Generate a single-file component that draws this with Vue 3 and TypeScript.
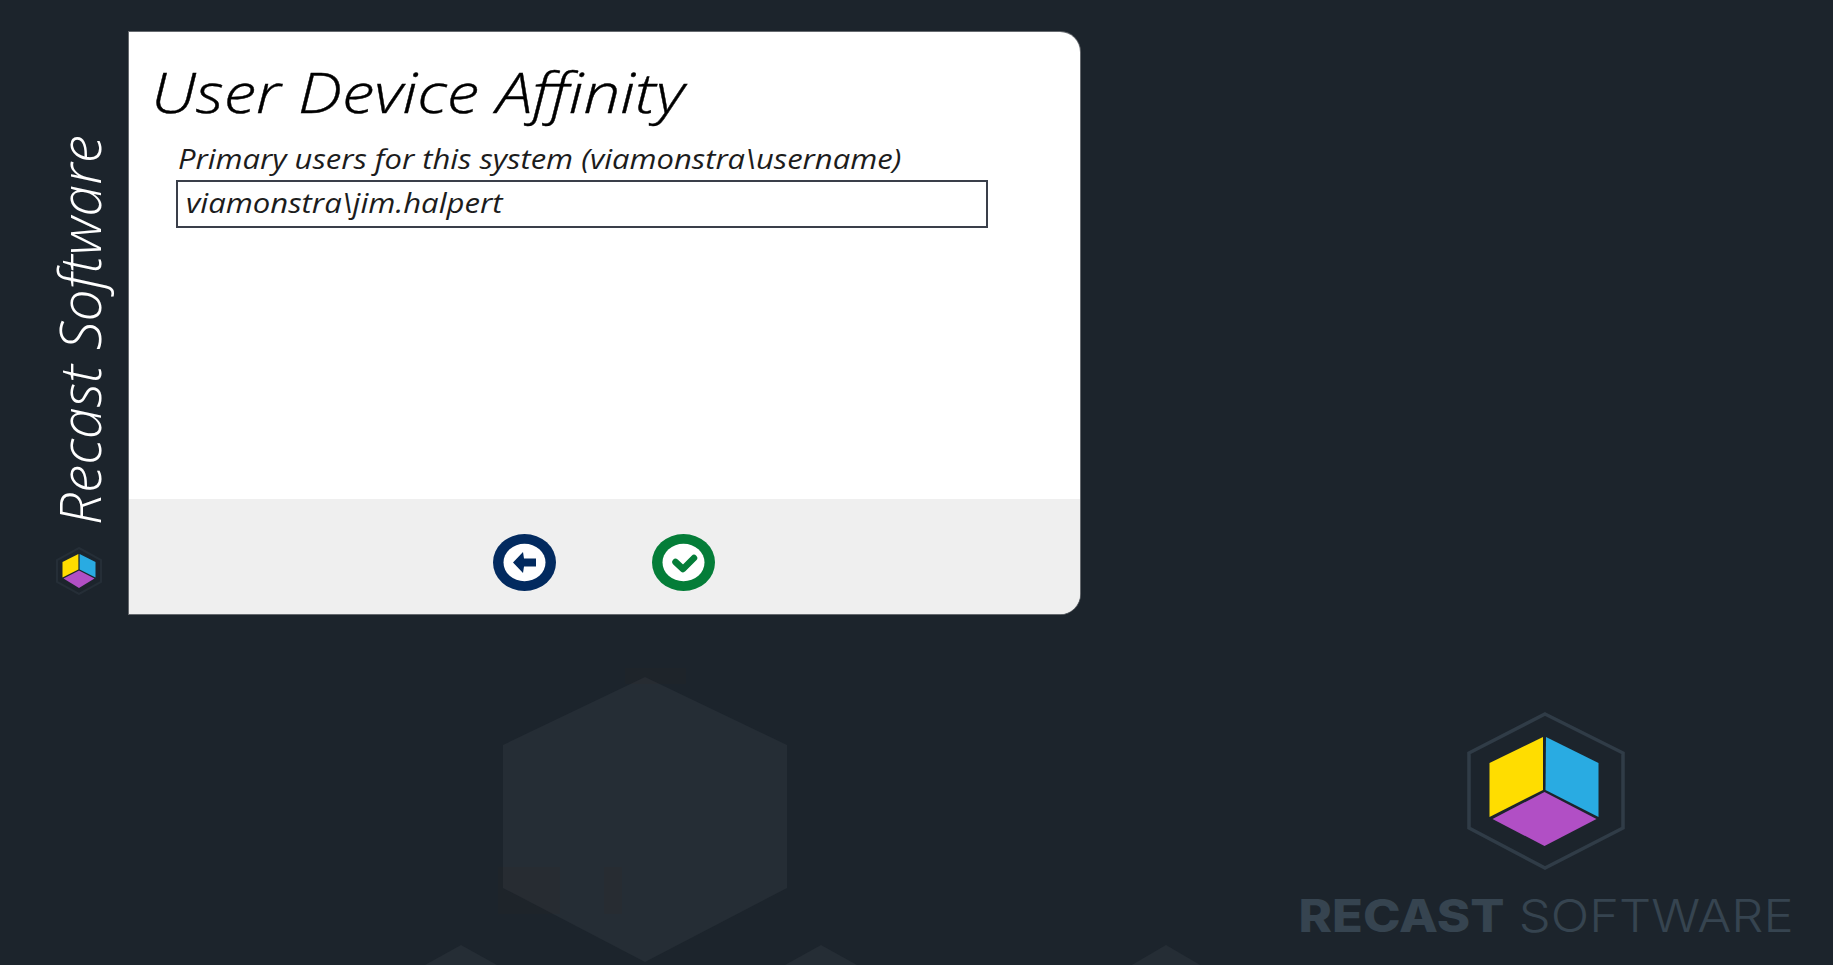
<script setup lang="ts">
const watermark = [
  '645,677 787,745 787,888 645,962 503,888 503,745',
  '461,945 560,1000 362,1000',
  '821,945 920,1000 722,1000',
  '1166,945 1260,1000 1072,1000',
]
const patches = [
  { x: 498, y: 867, w: 62, h: 47 },
  { x: 604, y: 867, w: 18, h: 47 },
  { x: 625, y: 668, w: 61, h: 16 },
]
</script>

<template>
  <div class="screen">
    <svg class="backdrop" viewBox="0 0 1833 965" aria-hidden="true">
      <polygon v-for="pts in watermark" :key="pts" :points="pts" fill="#252d35" />
      <rect v-for="p in patches" :key="p.x" :x="p.x" :y="p.y" :width="p.w" :height="p.h" fill="#3c2814" fill-opacity="0.08" />
    </svg>

    <aside class="rail">
      <span class="rail__name">Recast Software</span>
      <svg class="rail__logo" viewBox="0 0 48 48" aria-hidden="true">
        <polygon points="24,1 46,13 46,35 24,47 2,35 2,13" fill="none" stroke="#252e37" stroke-width="2" />
        <polygon points="23.4,7 23.4,22.5 7.5,30.5 7.5,15" fill="#ffdd00" />
        <polygon points="24.6,7 40.5,15 40.5,30.5 24.6,22.5" fill="#29abe2" />
        <polygon points="24,23.5 39.5,31.5 24,41 8.5,31.5" fill="#b14fc5" />
      </svg>
    </aside>

    <main class="card">
      <div class="card__body">
        <h1 class="card__title">User Device Affinity</h1>
        <div class="field">
          <label class="field__label">Primary users for this system (viamonstra\username)</label>
          <div class="field__box"><span class="field__value">viamonstra\jim.halpert</span></div>
        </div>
      </div>
      <footer class="card__footer">
        <button type="button" class="nav-btn" aria-label="Back">
          <svg viewBox="0 0 63 57" width="63" height="57" aria-hidden="true">
            <ellipse cx="31.5" cy="28.5" rx="31.5" ry="28.5" fill="#022a5f" />
            <ellipse cx="31.5" cy="28.5" rx="21" ry="18.7" fill="#fff" />
            <path d="M30 18 L20 28.5 L30 39 L31 32.5 L43 32.5 L43 24.5 L31 24.5 Z" fill="#022a5f" />
          </svg>
        </button>
        <button type="button" class="nav-btn" aria-label="Finish">
          <svg viewBox="0 0 63 57" width="63" height="57" aria-hidden="true">
            <ellipse cx="31.5" cy="28.5" rx="31.5" ry="28.5" fill="#047d38" />
            <ellipse cx="31.5" cy="28.5" rx="21" ry="18.7" fill="#fff" />
            <path d="M23.5 28 L31 35 L42 24" fill="none" stroke="#047d38" stroke-width="6.5" stroke-linecap="round" stroke-linejoin="round" />
          </svg>
        </button>
      </footer>
    </main>

    <div class="brand">
      <svg class="brand__logo" viewBox="0 0 160 158" aria-hidden="true">
        <polygon points="78,2 156,41 156,116 78,156 2,116 2,41" fill="none" stroke="#303c47" stroke-width="3.5" />
        <polygon points="76,25 76,78 22.5,105 22.5,51" fill="#ffdd00" />
        <polygon points="79,25 131.5,51 131.5,105 78.5,78" fill="#29abe2" />
        <polygon points="77.5,80 129.5,107 77.5,134 25.5,107" fill="#b14fc5" />
      </svg>
      <div class="brand__word"><b>RECAST</b> SOFTWARE</div>
    </div>
  </div>
</template>

<style>
html, body {
  margin: 0;
  background: #1c242c;
}
</style>

<style scoped>
.screen {
  position: relative;
  display: flex;
  align-items: flex-start;
  width: 1833px;
  height: 965px;
  overflow: hidden;
  background: #1c242c;
  font-family: "Open Sans", "Liberation Sans", sans-serif;
}

.backdrop {
  position: absolute;
  inset: 0;
  width: 1833px;
  height: 965px;
}

.rail {
  position: relative;
  width: 129px;
  height: 614px;
  flex: none;
  display: flex;
  flex-direction: column;
  align-items: center;
  justify-content: flex-end;
  padding: 0 0 19px 29px;
  box-sizing: border-box;
  gap: 22px;
  color: #fff;
}

.rail__name {
  writing-mode: vertical-rl;
  transform: rotate(180deg);
  font-size: 57px;
  font-weight: 300;
  font-style: italic;
  white-space: nowrap;
  line-height: 60px;
}

.rail__logo {
  width: 48px;
  height: 48px;
}

.card {
  position: relative;
  width: 951px;
  height: 582px;
  margin-top: 32px;
  display: flex;
  flex-direction: column;
  background: #fff;
  border-radius: 0 20px 20px 0;
  box-shadow: 0 0 0 1px rgba(190, 190, 190, 0.45);
  overflow: hidden;
}

.card__body {
  flex: 1;
  padding: 24px 0 0 22px;
  color: #000;
  font-style: italic;
}

.card__title {
  margin: 0;
  font-size: 56px;
  font-weight: 300;
  line-height: 70px;
  white-space: nowrap;
  transform: scaleX(1.168);
  transform-origin: left center;
  -webkit-text-stroke: 0.4px #000;
}

.field {
  margin: 11px 0 0 27px;
  display: flex;
  flex-direction: column;
}

.field__label {
  font-size: 27px;
  line-height: 43px;
  color: #1c1c1c;
  white-space: nowrap;
  transform: scaleX(1.147);
  transform-origin: left center;
}

.field__box {
  width: 812px;
  height: 48px;
  box-sizing: border-box;
  border: 2px solid #3a3f4a;
  padding-left: 8px;
  font-size: 28px;
  line-height: 40px;
  color: #1c1c1c;
  margin-left: -2px;
}

.field__value {
  display: inline-block;
  transform: scaleX(1.11);
  transform-origin: left center;
}

.card__footer {
  height: 115px;
  box-sizing: border-box;
  padding: 12px 2px 0 0;
  display: flex;
  align-items: center;
  justify-content: center;
  gap: 96px;
  background: #efefef;
}

.nav-btn {
  display: block;
  padding: 0;
  border: 0;
  background: none;
  width: 63px;
  height: 57px;
  cursor: pointer;
}

.brand {
  position: absolute;
  right: 67px;
  bottom: 33px;
  display: flex;
  flex-direction: column;
  align-items: center;
  gap: 29px;
}

.brand__logo {
  width: 160px;
  height: 158px;
  margin-left: 3px;
}

.brand__word {
  font-family: Inter, "Liberation Sans", sans-serif;
  font-size: 45px;
  line-height: 33px;
  font-weight: 300;
  color: #364450;
  white-space: nowrap;
  transform: scaleX(1.125);
}

.brand__word b {
  font-weight: 800;
}
</style>
